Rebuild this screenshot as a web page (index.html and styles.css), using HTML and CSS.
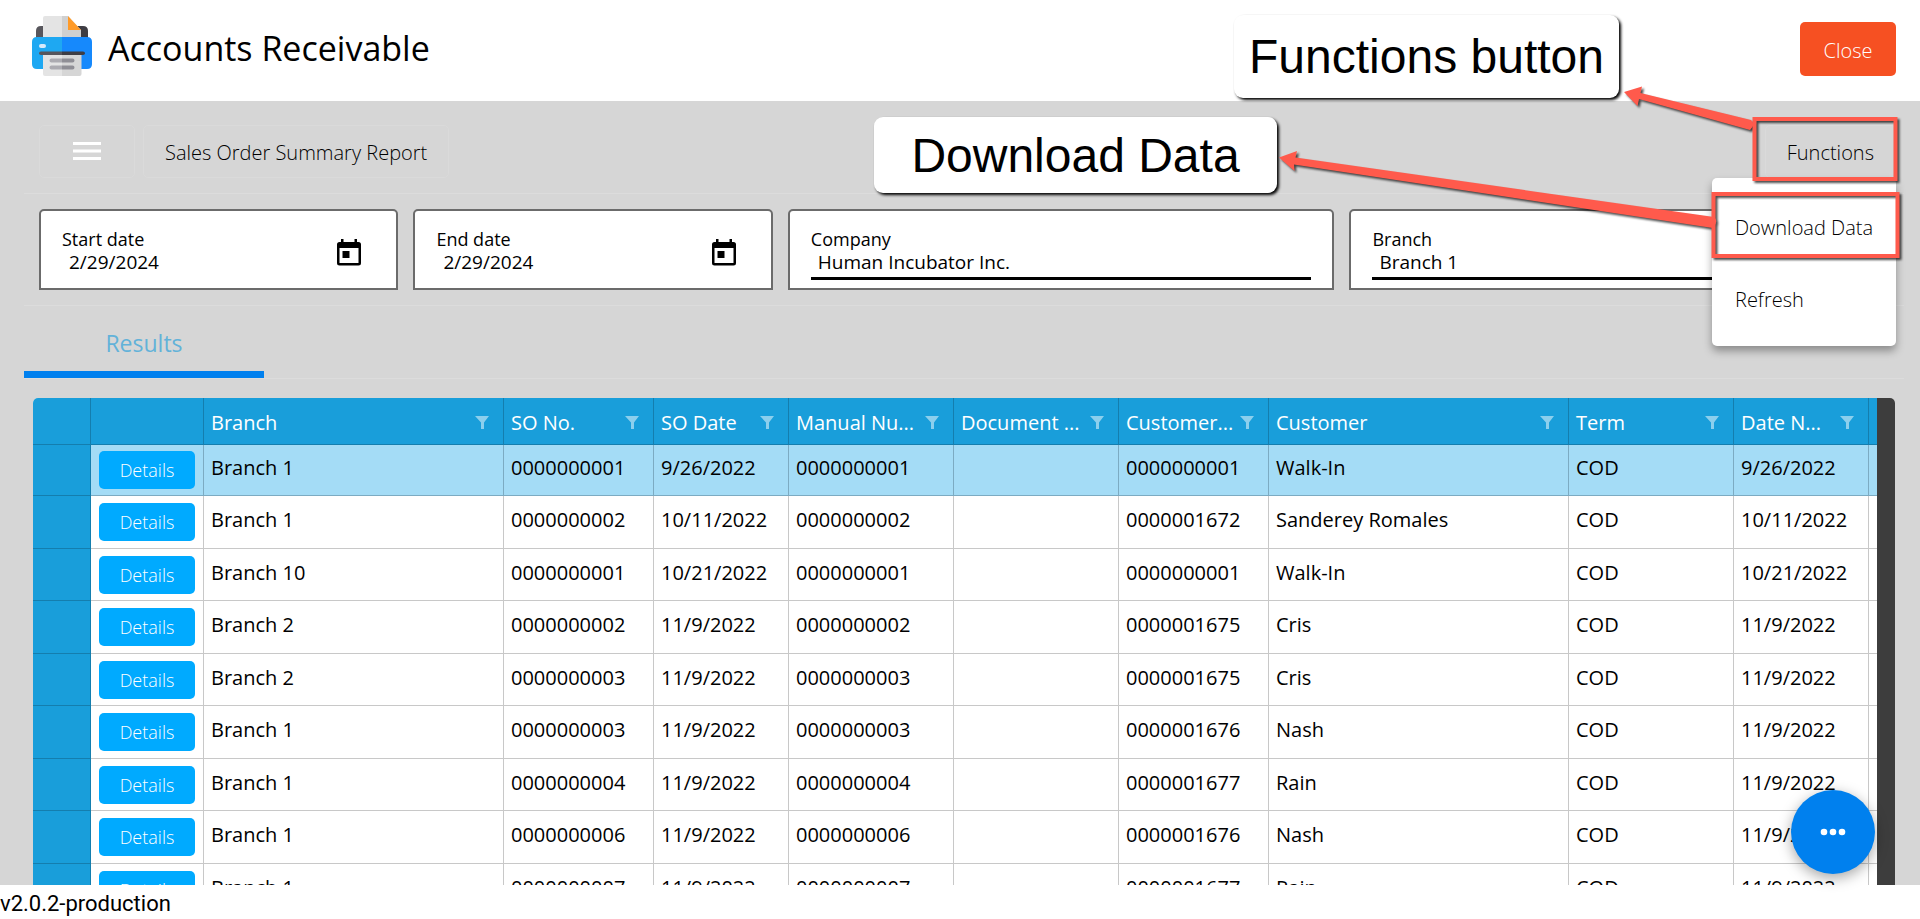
FILE: index.html
```html
<!DOCTYPE html>
<html lang="en">
  <head>
    <meta charset="UTF-8" />
    <meta name="viewport" content="width=device-width, initial-scale=1.0" />
    <title>Accounts Receivable</title>
    <link rel="stylesheet" href="styles.css">
  </head>
  <body>
    <!-- shared icons -->
    <svg class="sprite" aria-hidden="true">
      <symbol id="filter" viewBox="0 0 14 13"><path d="M0 0h14L9 6.500V13H6V6.500z" /></symbol>
      <symbol id="calendar" viewBox="0 0 24 27">
        <path fill-rule="evenodd" d="M4 0h2.500v3h11V0H20v3h1.500A2.500 2.500 0 0 1 24 5.500v18.500a2.500 2.500 0 0 1-2.500 2.500h-19A2.500 2.500 0 0 1 0 24V5.500A2.500 2.500 0 0 1 2.500 3H4zM2.500 9v15h19V9z" />
        <path d="M5.500 12h7v7h-7z" />
      </symbol>
    </svg>

    <header class="header">
      <svg class="logo" viewBox="0 0 60 60" aria-hidden="true">
        <path fill="#57565c" d="M4 24V15q0-5 5-5h6v14z" />
        <path fill="#3e3d43" d="M56 24V15q0-5-5-5h-8v14z" />
        <path fill="#e4e4e4" d="M11 24V2q0-2 2-2h17v24z" />
        <path fill="#d0d0d0" d="M30 0h6l13 14v10H30z" />
        <path fill="#ff9a27" d="M36 0l13 14H36z" />
        <path fill="#1ea8f2" d="M30 21v32H5q-5 0-5-5V26q0-5 5-5z" />
        <path fill="#1689fc" d="M30 21v32h25q5 0 5-5V26q0-5-5-5z" />
        <rect fill="#d5e9fb" x="7" y="28" width="7" height="4" rx="2" />
        <path fill="#e4e4e4" d="M11 38h19v22H13q-2 0-2-2z" />
        <path fill="#d6d6d6" d="M30 38h19.500v20q0 2-2 2H30z" />
        <path fill="#57565c" d="M30 35.500v3.500H9q-2 0-2-1.750t2-1.750z" />
        <path fill="#3e3d43" d="M30 35.500v3.500h21q2 0 2-1.750t-2-1.750z" />
        <path fill="#acabb1" d="M30 42.500v4H19.500q-2 0-2-2t2-2zM30 49.500v4H19.500q-2 0-2-2t2-2z" />
        <path fill="#8f8e95" d="M30 42.500v4h10.500q2 0 2-2t-2-2zM30 49.500v4h10.500q2 0 2-2t-2-2z" />
      </svg>
      <h1>Accounts Receivable</h1>
      <button class="close-btn" type="button">Close</button>
    </header>

    <main class="content">
      <div class="toolbar">
        <button class="tool-btn menu-btn" type="button" aria-label="Menu">
          <svg viewBox="0 0 28 18" width="28" height="18"><path fill="#fff" d="M0 0h28v3H0zM0 7.500h28v3H0zM0 15h28v3H0z" /></svg>
        </button>
        <button class="tool-btn" type="button">Sales Order Summary Report</button>
        <div class="functions">
          <button class="tool-btn" type="button">Functions</button>
          <div class="menu">
            <button type="button">Download Data</button>
            <button type="button">Refresh</button>
          </div>
        </div>
      </div>

      <form class="filters">
        <div class="field">
          <div class="field-text">
            <label for="start">Start date</label>
            <input id="start" type="text" value="2/29/2024">
          </div>
          <button class="date-btn" type="button" aria-label="Pick start date"><svg><use href="#calendar" /></svg></button>
        </div>
        <div class="field">
          <div class="field-text">
            <label for="end">End date</label>
            <input id="end" type="text" value="2/29/2024">
          </div>
          <button class="date-btn" type="button" aria-label="Pick end date"><svg><use href="#calendar" /></svg></button>
        </div>
        <div class="field wide">
          <div class="field-text">
            <label for="company">Company</label>
            <select id="company"><option>Human Incubator Inc.</option></select>
          </div>
        </div>
        <div class="field wide">
          <div class="field-text">
            <label for="branch">Branch</label>
            <select id="branch"><option>Branch 1</option></select>
          </div>
        </div>
      </form>

      <nav class="tabs">
        <button class="tab" type="button">Results</button>
      </nav>

      <div class="grid">
        <div class="grid-view">
          <table>
            <colgroup>
              <col class="w-head"><col class="w-btn"><col class="w-xl"><col class="w-m"><col class="w-s"><col class="w-l">
              <col class="w-l"><col class="w-m"><col class="w-xl"><col class="w-l"><col class="w-s"><col class="w-l">
            </colgroup>
            <thead>
              <tr>
                <th></th>
                <th></th>
                <th><div>Branch<svg><use href="#filter" /></svg></div></th>
                <th><div>SO No.<svg><use href="#filter" /></svg></div></th>
                <th><div>SO Date<svg><use href="#filter" /></svg></div></th>
                <th><div>Manual Nu...<svg><use href="#filter" /></svg></div></th>
                <th><div>Document ...<svg><use href="#filter" /></svg></div></th>
                <th><div>Customer...<svg><use href="#filter" /></svg></div></th>
                <th><div>Customer<svg><use href="#filter" /></svg></div></th>
                <th><div>Term<svg><use href="#filter" /></svg></div></th>
                <th><div>Date N...<svg><use href="#filter" /></svg></div></th>
                <th></th>
              </tr>
            </thead>
            <tbody>
              <tr class="selected"><th></th><td><button type="button">Details</button></td><td>Branch 1</td><td>0000000001</td><td>9/26/2022</td><td>0000000001</td><td></td><td>0000000001</td><td>Walk-In</td><td>COD</td><td>9/26/2022</td><td></td></tr>
              <tr><th></th><td><button type="button">Details</button></td><td>Branch 1</td><td>0000000002</td><td>10/11/2022</td><td>0000000002</td><td></td><td>0000001672</td><td>Sanderey Romales</td><td>COD</td><td>10/11/2022</td><td></td></tr>
              <tr><th></th><td><button type="button">Details</button></td><td>Branch 10</td><td>0000000001</td><td>10/21/2022</td><td>0000000001</td><td></td><td>0000000001</td><td>Walk-In</td><td>COD</td><td>10/21/2022</td><td></td></tr>
              <tr><th></th><td><button type="button">Details</button></td><td>Branch 2</td><td>0000000002</td><td>11/9/2022</td><td>0000000002</td><td></td><td>0000001675</td><td>Cris</td><td>COD</td><td>11/9/2022</td><td></td></tr>
              <tr><th></th><td><button type="button">Details</button></td><td>Branch 2</td><td>0000000003</td><td>11/9/2022</td><td>0000000003</td><td></td><td>0000001675</td><td>Cris</td><td>COD</td><td>11/9/2022</td><td></td></tr>
              <tr><th></th><td><button type="button">Details</button></td><td>Branch 1</td><td>0000000003</td><td>11/9/2022</td><td>0000000003</td><td></td><td>0000001676</td><td>Nash</td><td>COD</td><td>11/9/2022</td><td></td></tr>
              <tr><th></th><td><button type="button">Details</button></td><td>Branch 1</td><td>0000000004</td><td>11/9/2022</td><td>0000000004</td><td></td><td>0000001677</td><td>Rain</td><td>COD</td><td>11/9/2022</td><td></td></tr>
              <tr><th></th><td><button type="button">Details</button></td><td>Branch 1</td><td>0000000006</td><td>11/9/2022</td><td>0000000006</td><td></td><td>0000001676</td><td>Nash</td><td>COD</td><td>11/9/2022</td><td></td></tr>
              <tr><th></th><td><button type="button">Details</button></td><td>Branch 1</td><td>0000000007</td><td>11/9/2022</td><td>0000000007</td><td></td><td>0000001677</td><td>Rain</td><td>COD</td><td>11/9/2022</td><td></td></tr>
            </tbody>
          </table>
        </div>
        <div class="grid-scroll"></div>
      </div>
    </main>

    <footer class="footer">v2.0.2-production</footer>

    <button class="fab" type="button" aria-label="More">
      <svg viewBox="0 0 26 8" width="26" height="8"><circle cx="4" cy="4" r="3.300" /><circle cx="13" cy="4" r="3.300" /><circle cx="22" cy="4" r="3.300" /></svg>
    </button>

    <!-- callouts -->
    <div class="callout callout-functions">Functions button</div>
    <div class="callout callout-download">Download Data</div>
    <svg class="arrows" viewBox="1220 0 700 380" aria-hidden="true">
      <rect x="1754.500" y="119" width="141" height="60" />
      <rect x="1713.500" y="194" width="184" height="62" />
      <path d="M1624 92L1642 86.500L1640.500 93L1751 120Q1756 124 1750 130L1639 99L1637.500 106z" />
      <path d="M1279 157.500L1297 151L1295.500 157.500L1714 217Q1719 221 1713 228L1294 164.500L1294.500 171z" />
    </svg>
  </body>
</html>
```
FILE: styles.css
```css
* {
  margin: 0;
  padding: 0;
  box-sizing: border-box;
}

body {
  height: 100vh;
  display: flex;
  flex-direction: column;
  position: relative;
  overflow: hidden;
  background: #fff;
  color: #000;
  font-family: 'Open Sans', 'Noto Sans', sans-serif;
  font-size: 20px;
}

button,
input,
select {
  font: inherit;
  color: inherit;
  border: none;
  background: none;
}

button {
  cursor: pointer;
}

.sprite {
  display: none;
}

/* header */
.header {
  display: flex;
  align-items: center;
  height: 101px;
  padding: 0 24px 10px 32px;
  flex-shrink: 0;
}

.logo {
  width: 60px;
  height: 60px;
  margin-right: 16px;
}

h1 {
  padding-top: 4px;
  font-size: 34px;
  font-weight: 400;
}

.close-btn {
  width: 96px;
  height: 54px;
  margin: 7px 0 0 auto;
  padding-top: 2px;
  border-radius: 5px;
  background: #f65022;
  color: #fff;
  font-weight: 300;
}

/* content */
.content {
  flex: 1;
  min-height: 0;
  display: flex;
  flex-direction: column;
  padding: 0 16px 0 24px;
  background: #d6d6d6;
}

.toolbar {
  display: flex;
  gap: 8px;
  padding: 24px 8px 15px 15px;
  border-bottom: 1px solid #dcdcdc;
}

.tool-btn {
  height: 53px;
  padding: 2px 21px 0;
  border: 1px solid #dadada;
  border-radius: 5px;
  font-weight: 300;
}

.menu-btn {
  width: 96px;
}

.functions {
  position: relative;
  margin-left: auto;
}

.menu {
  position: absolute;
  top: 53px;
  right: 0;
  width: 184px;
  padding: 12px 0;
  border-radius: 5px;
  background: #fff;
  box-shadow: 0 5px 8px rgba(0, 0, 0, 0.35);
  z-index: 2;
}

.menu button {
  display: block;
  width: 100%;
  height: 72px;
  padding: 2px 23px 0;
  text-align: left;
  white-space: nowrap;
  font-weight: 300;
}

.filters {
  display: grid;
  grid-template-columns: repeat(10, 1fr);
  gap: 15px;
  padding: 15px 8px 15px 15px;
  border-bottom: 1px solid #dcdcdc;
}

.field {
  grid-column: span 2;
  display: flex;
  align-items: center;
  height: 81px;
  padding: 0 21px;
  border: 2px solid #6b6b6b;
  border-radius: 5px 5px 0 0;
  background: #fff;
}

.wide {
  grid-column: span 3;
}

.field-text {
  flex: 1;
  min-width: 0;
  display: flex;
  flex-direction: column;
  padding-top: 2px;
}

.field label {
  font-size: 18px;
  line-height: 22px;
}

.field input,
.field select {
  width: 100%;
  height: 24px;
  padding: 0 7px;
  font-size: 19px;
  line-height: 24px;
  appearance: none;
}

.wide .field-text {
  padding-top: 8px;
}

.field select {
  height: 30px;
  padding-bottom: 3px;
  border-bottom: 3px solid #000;
}

.date-btn {
  width: 24px;
  height: 27px;
  margin: 6px 14px 0 0;
}

.date-btn svg {
  display: block;
  width: 24px;
  height: 27px;
}

.tabs {
  display: flex;
  border-bottom: 1px solid #dcdcdc;
}

.tab {
  width: 240px;
  height: 72px;
  padding-top: 8px;
  border-bottom: 7px solid #0080ee;
  color: #62b2d9;
  font-size: 23px;
}

/* grid */
.grid {
  flex: 1;
  min-height: 0;
  display: flex;
  margin: 19px 9px 0 9px;
  border-radius: 5px 5px 0 0;
  overflow: hidden;
  background: #fff;
}

.grid-view {
  flex: 1;
  min-width: 0;
  overflow: hidden;
}

.grid-scroll {
  width: 18px;
  background: #3d3d3d;
}

table {
  width: 2001px;
  table-layout: fixed;
  border-collapse: separate;
  border-spacing: 0;
}

.w-head { width: 58px; }
.w-btn { width: 113px; }
.w-s { width: 135px; }
.w-m { width: 150px; }
.w-l { width: 165px; }
.w-xl { width: 300px; }

th,
td {
  padding: 0 7px;
  border-right: 1px solid #c8c8c8;
  border-bottom: 1px solid #c8c8c8;
  text-align: left;
  white-space: nowrap;
}

th {
  background: #199eda;
  border-color: #147eae;
  color: #fff;
  font-weight: 500;
}

thead tr {
  height: 47px;
}

thead div {
  display: flex;
  align-items: center;
  justify-content: space-between;
  padding: 2px 7px 0 0;
}

thead svg {
  width: 14px;
  height: 13px;
  flex-shrink: 0;
  fill: #8ccfed;
}

tbody tr {
  height: 52px;
}

tbody tr:nth-child(even) {
  height: 53px;
}

tbody tr.selected {
  height: 51px;
}

.selected td {
  background: #a4dcf6;
  border-color: #7cabc2;
}

td {
  padding-bottom: 5px;
}

td:nth-child(2) {
  padding: 0 8px;
}

td button {
  display: block;
  width: 96px;
  height: 38px;
  border-radius: 5px;
  background: #00aaff;
  color: #fff;
  font-size: 18px;
  font-weight: 300;
}

.footer {
  height: 34px;
  flex-shrink: 0;
  font-family: Roboto, sans-serif;
  font-size: 22px;
  line-height: 37px;
}

.fab {
  position: fixed;
  right: 45px;
  bottom: 45px;
  width: 84px;
  height: 84px;
  border-radius: 50%;
  background: #0080ee;
  box-shadow: 0 4px 14px rgba(0, 0, 0, 0.35);
}

.fab svg {
  display: block;
  margin: 0 auto;
  fill: #fff;
}

/* callouts */
.callout {
  position: absolute;
  display: flex;
  align-items: center;
  justify-content: center;
  border-radius: 9px;
  background: #fff;
  box-shadow: 2px 2px 3px #000;
  font-family: 'Liberation Sans', Arial, sans-serif;
  font-size: 48px;
  white-space: nowrap;
}

.callout-functions {
  top: 15px;
  right: 301px;
  width: 385px;
  height: 83px;
}

.callout-download {
  top: 117px;
  right: 643px;
  width: 403px;
  height: 76px;
}

.arrows {
  position: absolute;
  top: 0;
  right: 0;
  width: 700px;
  height: 380px;
  pointer-events: none;
  z-index: 3;
  fill: #ff5a4c;
  filter: drop-shadow(2px 2px 1px rgba(0, 0, 0, 0.7));
}

.arrows rect {
  fill: none;
  stroke: #ff5a4c;
  stroke-width: 4;
}
```
